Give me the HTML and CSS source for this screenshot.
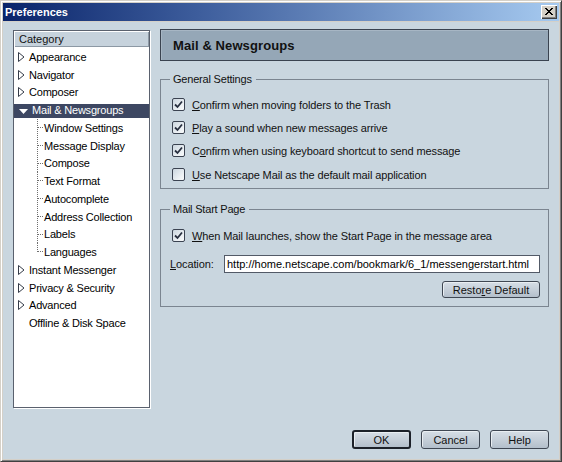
FILE: index.html
```html
<!DOCTYPE html>
<html>
<head>
<meta charset="utf-8">
<title>Preferences</title>
<link rel="stylesheet" href="styles.css">
</head>
<body>
<div class="window">
  <div class="titlebar">
    <span class="title">Preferences</span>
    <span class="close-btn"><svg width="8" height="7" viewBox="0 0 8 7" shape-rendering="crispEdges"><path d="M0 0h2v1H0z M6 0h2v1H6z M1 1h2v1H1z M5 1h2v1H5z M2 2h4v1H2z M3 3h2v1H3z M2 4h4v1H2z M1 5h2v1H1z M5 5h2v1H5z M0 6h2v1H0z M6 6h2v1H6z" fill="#000"/></svg></span>
  </div>
  <div class="client">
    <div class="main">
      <div class="tree">
        <div class="tree-head">Category</div>
        <ul class="tree-list">
          <li class="row"><svg class="twisty" width="7" height="10" viewBox="0 0 7 10"><polygon points="0.5,0.5 6,5 0.5,9.5" fill="#fff" stroke="#343b48"/></svg>Appearance</li>
          <li class="row"><svg class="twisty" width="7" height="10" viewBox="0 0 7 10"><polygon points="0.5,0.5 6,5 0.5,9.5" fill="#fff" stroke="#343b48"/></svg>Navigator</li>
          <li class="row"><svg class="twisty" width="7" height="10" viewBox="0 0 7 10"><polygon points="0.5,0.5 6,5 0.5,9.5" fill="#fff" stroke="#343b48"/></svg>Composer</li>
          <li class="row selected"><svg class="twisty-down" width="9" height="5" viewBox="0 0 9 5"><polygon points="0,0 9,0 4.5,5" fill="#fff"/></svg>Mail &amp; Newsgroups</li>
          <li class="row child">Window Settings</li>
          <li class="row child">Message Display</li>
          <li class="row child">Compose</li>
          <li class="row child">Text Format</li>
          <li class="row child">Autocomplete</li>
          <li class="row child">Address Collection</li>
          <li class="row child">Labels</li>
          <li class="row child last">Languages</li>
          <li class="row"><svg class="twisty" width="7" height="10" viewBox="0 0 7 10"><polygon points="0.5,0.5 6,5 0.5,9.5" fill="#fff" stroke="#343b48"/></svg>Instant Messenger</li>
          <li class="row"><svg class="twisty" width="7" height="10" viewBox="0 0 7 10"><polygon points="0.5,0.5 6,5 0.5,9.5" fill="#fff" stroke="#343b48"/></svg>Privacy &amp; Security</li>
          <li class="row"><svg class="twisty" width="7" height="10" viewBox="0 0 7 10"><polygon points="0.5,0.5 6,5 0.5,9.5" fill="#fff" stroke="#343b48"/></svg>Advanced</li>
          <li class="row leaf">Offline &amp; Disk Space</li>
        </ul>
      </div>
      <div class="panel">
        <div class="panel-header">Mail &amp; Newsgroups</div>
        <fieldset class="group general">
          <legend>General Settings</legend>
          <div class="check-row"><span class="cb"><svg width="11" height="11" viewBox="0 0 11 11"><path d="M2 5.5 L4.5 8 L9 2.5" fill="none" stroke="#283040" stroke-width="1.8"/></svg></span><span><u>C</u>onfirm when moving folders to the Trash</span></div>
          <div class="check-row"><span class="cb"><svg width="11" height="11" viewBox="0 0 11 11"><path d="M2 5.5 L4.5 8 L9 2.5" fill="none" stroke="#283040" stroke-width="1.8"/></svg></span><span><u>P</u>lay a sound when new messages arrive</span></div>
          <div class="check-row"><span class="cb"><svg width="11" height="11" viewBox="0 0 11 11"><path d="M2 5.5 L4.5 8 L9 2.5" fill="none" stroke="#283040" stroke-width="1.8"/></svg></span><span>C<u>o</u>nfirm when using keyboard shortcut to send message</span></div>
          <div class="check-row extra"><span class="cb"></span><span><u>U</u>se Netscape Mail as the default mail application</span></div>
        </fieldset>
        <fieldset class="group startpage">
          <legend>Mail Start Page</legend>
          <div class="check-row"><span class="cb"><svg width="11" height="11" viewBox="0 0 11 11"><path d="M2 5.5 L4.5 8 L9 2.5" fill="none" stroke="#283040" stroke-width="1.8"/></svg></span><span><u>W</u>hen Mail launches, show the Start Page in the message area</span></div>
          <div class="location-row">
            <label class="loc-label" for="loc"><u>L</u>ocation:</label>
            <input id="loc" class="loc-input" type="text" value="http://home.netscape.com/bookmark/6_1/messengerstart.html">
          </div>
          <div class="restore-row"><button class="btn restore">Resto<u>r</u>e Default</button></div>
        </fieldset>
      </div>
    </div>
    <div class="footer">
      <button class="btn default">OK</button>
      <button class="btn">Cancel</button>
      <button class="btn">Help</button>
    </div>
  </div>
</div>
</body>
</html>
```

FILE: styles.css
```css
html, body {
  margin: 0;
  padding: 0;
  background: #d4d0c8;
}

body {
  font-family: "Liberation Sans", Arial, sans-serif;
  font-size: 11px;
  color: #111;
}

.window {
  width: 562px;
  height: 462px;
  box-sizing: border-box;
  background: #d4d0c8;
  border: 1px solid;
  border-color: #d4d0c8 #404040 #404040 #d4d0c8;
  padding: 2px;
  box-shadow: inset 1px 1px 0 #fff, inset -1px -1px 0 #808080;
  display: flex;
  flex-direction: column;
}

.titlebar {
  height: 18px;
  margin-bottom: 1px;
  padding: 0 2px;
  display: flex;
  align-items: center;
  justify-content: space-between;
  background: linear-gradient(90deg, #0a246a 0%, #3d5d9c 35%, #a6caf0 100%);
}

.title {
  color: #fff;
  font-weight: bold;
  font-size: 11px;
}

.close-btn {
  width: 16px;
  height: 14px;
  box-sizing: border-box;
  background: #d4d0c8;
  box-shadow: inset 1px 1px 0 #fff, inset -1px -1px 0 #404040, inset -2px -2px 0 #808080;
  display: flex;
  align-items: center;
  justify-content: center;
  padding-bottom: 1px;
}

.close-btn svg {
  display: block;
}

.client {
  flex: 1;
  background: #c9d6df;
  padding: 8px 10px 10px 10px;
  display: flex;
  flex-direction: column;
}

.main {
  display: flex;
  gap: 10px;
}

.tree {
  width: 137px;
  height: 378px;
  box-sizing: border-box;
  border: 1px solid #5a616e;
  background: #fff;
  box-shadow: 1px 1px 0 #fff;
  flex-shrink: 0;
  letter-spacing: -0.2px;
}

.tree-head {
  height: 16px;
  line-height: 16px;
  padding-left: 5px;
  background: #c6d2dc;
  box-shadow: inset 1px 1px 0 #fff, inset -1px -1px 0 #8c98a4;
  color: #111;
  letter-spacing: 0;
}

.tree-list {
  list-style: none;
  margin: 0;
  padding: 1px 0 0 0;
}

.row {
  height: 17.75px;
  display: flex;
  align-items: center;
  gap: 4px;
  padding-left: 4px;
  color: #000;
  white-space: nowrap;
}

.twisty {
  display: block;
  flex-shrink: 0;
}

.row.selected {
  color: #fff;
  padding-left: 5px;
  background: linear-gradient(to bottom, transparent 3px, #3d4762 3px, #3d4762 17px, transparent 17px);
}

.twisty-down {
  display: block;
  flex-shrink: 0;
  margin-top: 2px;
}

.row.leaf {
  padding-left: 15px;
}

.row.child {
  padding-left: 23px;
  gap: 0;
  background-image: linear-gradient(to bottom, #6e6e6e 50%, transparent 50%);
  background-size: 1px 2px;
  background-repeat: repeat-y;
  background-position: 23px 0;
}

.row.child.last {
  background: none;
}

.row.child::before {
  content: "";
  align-self: flex-start;
  width: 6px;
  height: 9px;
  margin-right: 1px;
  border-left: 1px dotted #6e6e6e;
  border-bottom: 1px dotted #6e6e6e;
  box-sizing: border-box;
  flex-shrink: 0;
}

.panel {
  width: 389px;
  margin-top: -1px;
  display: flex;
  flex-direction: column;
  letter-spacing: -0.12px;
}

.panel-header {
  height: 32px;
  box-sizing: border-box;
  border: 1px solid #3a4350;
  background: #95a7b7;
  box-shadow: inset 1px 1px 0 #a7b6c4;
  padding-left: 12px;
  display: flex;
  align-items: center;
  font-size: 13px;
  font-weight: bold;
  color: #111;
  letter-spacing: 0.1px;
}

.group {
  margin: 0;
  border: 1px solid #7b8590;
  padding: 0 8px 0 11px;
  min-width: 0;
}

.group legend {
  margin-left: -2px;
  padding: 0 4px 0 3px;
  line-height: 13px;
  font-size: 11px;
  color: #111;
  letter-spacing: -0.2px;
}

.general {
  margin-top: 12px;
  padding-top: 7px;
  padding-bottom: 2px;
}

.startpage {
  margin-top: 14px;
  padding-top: 8px;
  padding-bottom: 8px;
}

.check-row {
  height: 23px;
  display: flex;
  align-items: center;
  gap: 7px;
  white-space: nowrap;
}

.check-row.extra {
  margin-top: 1px;
}

.cb {
  width: 13px;
  height: 13px;
  box-sizing: border-box;
  border: 1px solid #3b4351;
  border-radius: 2px;
  background: linear-gradient(135deg, #cbd6df 0%, #eef2f5 70%, #f7f9fa 100%);
  display: flex;
  align-items: center;
  justify-content: center;
  flex-shrink: 0;
}

.cb svg {
  display: block;
}

.location-row {
  margin-top: 8px;
  margin-left: -2px;
  height: 18px;
  display: flex;
  align-items: center;
}

.loc-input {
  margin-left: auto;
  width: 316px;
  height: 18px;
  box-sizing: border-box;
  border: 1px solid #525a67;
  background: #fff;
  padding: 0 2px;
  font-family: "Liberation Sans", Arial, sans-serif;
  font-size: 11px;
  color: #000;
  outline: none;
  letter-spacing: 0;
}

.restore-row {
  margin-top: 8px;
  display: flex;
  justify-content: flex-end;
}

.btn {
  width: 59px;
  height: 19px;
  box-sizing: border-box;
  border: 1px solid #3f4753;
  border-radius: 3px;
  background: linear-gradient(to bottom, #d6dee6 0%, #c2ccd6 60%, #b3bfcb 100%);
  box-shadow: inset 1px 1px 0 #e9eef2;
  padding: 0;
  font-family: "Liberation Sans", Arial, sans-serif;
  font-size: 11px;
  color: #111;
  text-align: center;
}

.btn.restore {
  width: 98px;
  height: 17px;
}

.btn.default {
  border: 2px solid #1c2129;
}

.footer {
  margin-top: auto;
  display: flex;
  justify-content: flex-end;
  gap: 10px;
}
```
